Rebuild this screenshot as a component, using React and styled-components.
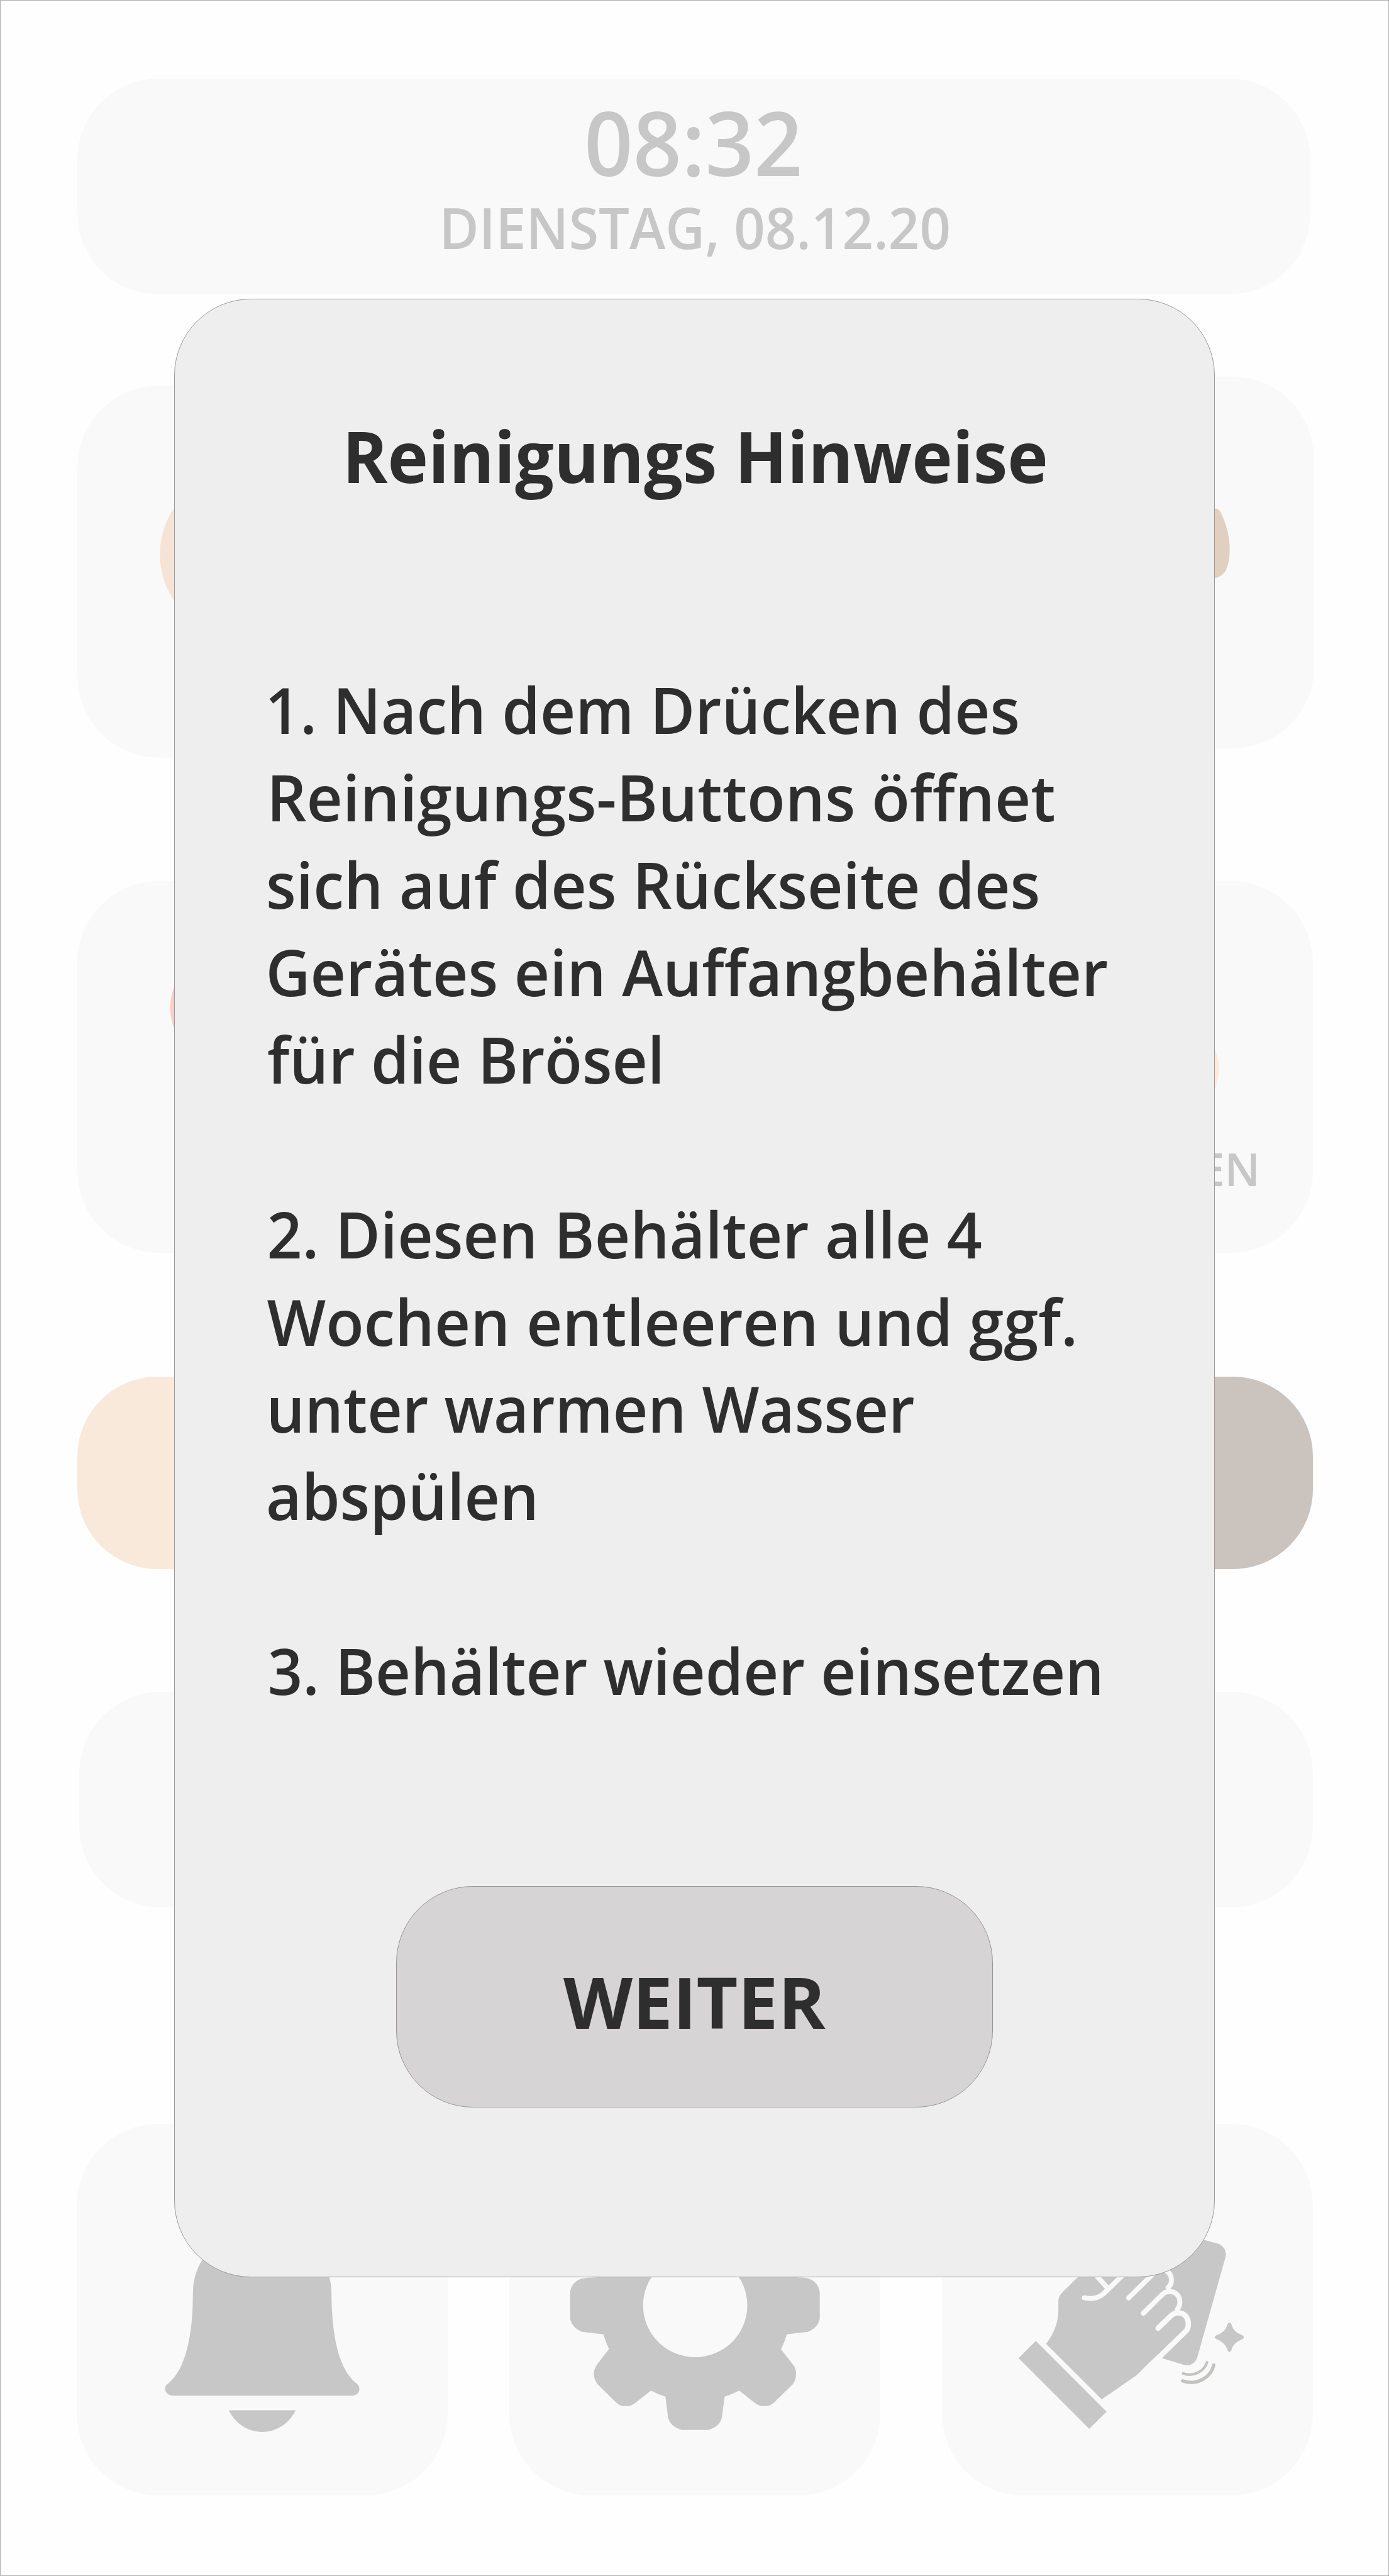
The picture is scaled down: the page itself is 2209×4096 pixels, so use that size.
import React from 'react';
import styled, { createGlobalStyle } from 'styled-components';

const CARD = '#f9f9f9';
const ICON = '#c7c7c7';
const INK = '#2e2e2e';

const GlobalStyle = createGlobalStyle`
  body {
    margin: 0;
    background: #fefefe;
    font-family: 'Open Sans', 'Noto Sans', sans-serif;
  }
`;

const Screen = styled.div`
  position: relative;
  box-sizing: border-box;
  width: 2209px;
  height: 4096px;
  overflow: hidden;
  border: 1px solid #b0b0b0;
  background: #fefefe;
`;

const Dashboard = styled.div`
  display: flex;
  flex-direction: column;
  padding: 124px 120px 0 120.5px;
`;

const Header = styled.header`
  display: flex;
  flex-direction: column;
  align-items: center;
  box-sizing: border-box;
  width: 1961px;
  height: 343px;
  margin-left: 1px;
  padding-top: 24.7px;
  border-radius: 129px;
  background: ${CARD};
  color: ${ICON};
  font-weight: 600;
  white-space: nowrap;
`;

const Time = styled.div`
  font-size: 142px;
  line-height: 151.8px;
  transform: scaleX(0.956);
`;

const DateText = styled.div`
  margin-top: -1px;
  font-size: 89.7px;
  line-height: 122.2px;
  transform: translateX(2px) scaleX(0.966);
`;

const CardRow = styled.div`
  display: flex;
  justify-content: space-between;
  align-items: flex-start;
  height: ${(p) => p.$height}px;
  margin-top: ${(p) => p.$gap}px;
  margin-left: ${(p) => p.$left || 0}px;
  margin-right: ${(p) => p.$right || 0}px;
`;

const Card = styled.div`
  display: grid;
  width: 590px;
  height: 591.5px;
  margin-top: ${(p) => p.$drop || 0}px;
  border-radius: 130px;
  background: ${CARD};
  & > * {
    grid-area: 1 / 1;
  }
`;

const Art = styled.svg`
  display: block;
  width: 100%;
  height: 100%;
`;

const CardLabel = styled.span`
  align-self: end;
  justify-self: end;
  padding: 0 84px 85.4px 0;
  color: ${ICON};
  font-size: 72px;
  font-weight: 600;
  line-height: 98px;
`;

const LevelBar = styled.div`
  display: flex;
  height: 305.7px;
  margin: 196.7px 0 0 1px;
  overflow: hidden;
  border-radius: 127px;
`;

const LevelPart = styled.div`
  flex: 1;
  background: ${(p) => p.$color};
`;

const Slider = styled.div`
  height: 343px;
  margin: 195.8px 0 0 4px;
  border-radius: 130px;
  background: ${CARD};
`;

const Modal = styled.section`
  position: absolute;
  top: 474px;
  left: 276px;
  display: flex;
  flex-direction: column;
  align-items: center;
  box-sizing: border-box;
  width: 1655px;
  height: 3146px;
  padding-top: 171.5px;
  border: 1px solid #9b9b9b;
  border-radius: 122px;
  background: #eeeeee;
  color: ${INK};
`;

const Title = styled.h1`
  margin: 0;
  font-size: 112.7px;
  font-weight: 700;
  line-height: 153.5px;
  white-space: nowrap;
  transform: translateX(1px) scaleX(0.968);
`;

const Steps = styled.div`
  display: flex;
  flex-direction: column;
  align-self: stretch;
  gap: 138.87px;
  margin-top: 258.4px;
  padding-left: 145px;
`;

const Step = styled.p`
  margin: 0;
  font-size: 102px;
  font-weight: 600;
  line-height: 138.87px;
  white-space: nowrap;
`;

const Line = styled.span`
  display: block;
  transform-origin: 0 0;
  transform: translateX(${(p) => p.$shift}px) scaleX(${(p) => p.$fit});
`;

const NextButton = styled.button`
  box-sizing: border-box;
  display: flex;
  justify-content: center;
  align-items: flex-start;
  width: 949px;
  height: 352px;
  margin: 272.9px 0 0;
  padding: 106.5px 0 0;
  border: 1px solid #969596;
  border-radius: 122px;
  background: #d6d4d5;
  color: ${INK};
  font-family: inherit;
  font-size: 112.8px;
  font-weight: 700;
  line-height: 153.6px;
`;

const ButtonText = styled.span`
  transform: scaleX(1.01);
`;

const steps = [
  [
    ['1. Nach dem Drücken des', -1.5, 0.957],
    ['Reinigungs-Buttons öffnet', 1, 0.9752],
    ['sich auf des Rückseite des', 0, 0.9625],
    ['Gerätes ein Auffangbehälter', -0.5, 0.961],
    ['für die Brösel', 2, 0.958],
  ],
  [
    ['2. Diesen Behälter alle 4', 1.4, 0.9623],
    ['Wochen entleeren und ggf.', 1.4, 0.973],
    ['unter warmen Wasser', 0.5, 0.9455],
    ['abspülen', 0, 0.9585],
  ],
  [['3. Behälter wieder einsetzen', 2.7, 0.952]],
];

const BunArt = () => (
  <Art viewBox="193 967 930 932">
    <circle cx="610" cy="1390" r="210" fill="#f5e4d5" />
    <circle cx="469" cy="1391" r="35" fill="#fdefd2" />
  </Art>
);

const BreadArt = () => (
  <Art viewBox="2364 944 930 932">
    <path
      d="M2980 1274H3045C3050 1274 3055 1276 3057.800 1280.800C3068 1299 3082 1337 3082 1368C3083 1396 3080 1412 3072.600 1429C3067 1440 3057 1446 3045 1449H2980Z"
      fill="#e1cfbf"
    />
  </Art>
);

const RedArt = () => (
  <Art viewBox="193 2208 930 932">
    <circle cx="569" cy="2525" r="143" fill="#ffccc7" />
  </Art>
);

const PeachArt = () => (
  <Art viewBox="2361 2208 930 932">
    <circle cx="2923.300" cy="2679.400" r="132" fill="#fdeadb" />
  </Art>
);

const BellArt = () => (
  <Art viewBox="59 108 1325 1393" preserveAspectRatio="none" fill={ICON}>
    <path d="M508 616C485 655 474 695 474 745C474 905 446 1028 388 1078C364 1093 374 1126 404 1126H1042C1070 1126 1078 1093 1056 1078C1000 1030 970 920 969 745C969 720 966 700 961 681L900 560H550Z" />
    <path d="M602 1181H841C790 1289 653 1289 602 1181Z" />
  </Art>
);

const GearArt = () => (
  <Art viewBox="56 -829.5 1459 2358.500" preserveAspectRatio="none">
    <path
      fill={ICON}
      d="M400 144L378 145Q350 147 340 152C312 165 297 203 295 240V400C297 440 314 472 342 489L426 505Q435 555 448 598L402 695Q389 725 388 752Q388 790 404 823L473 933Q488 958 504 960H522Q537 958 553 938L613 862Q640 885 670 900L680 1030Q688 1090 733 1111H840Q885 1090 892 1030L903 900Q932 885 960 862L1020 938Q1036 958 1050 960H1070Q1086 956 1100 933L1170 823Q1184 795 1184 755Q1184 720 1170 695L1124 598Q1138 560 1147 505L1230 489Q1270 465 1277 405V240Q1272 170 1230 150Q1220 146 1190 144V100H400Z"
    />
    <ellipse cx="787" cy="322" rx="205" ry="328" fill={CARD} />
  </Art>
);

const WipeArt = () => (
  <Art viewBox="21 -228 930 932">
    <g fill={ICON}>
      <path d="M560 20L678 62.500L714 72.500C728 78 735 91 732 105.600L661.500 356C657 372 643 380 628 376L572 359L540 340V60Z" />
      <path d="M361 157L326.500 190.600C315 202 313 206 313 218V239C313 271 300 300 282 323L421.600 462.400L504 405.500C514 398 518 393 523 388L627 287L632 271L600 140L400 120Z" />
      <path d="M256.400 316L213 359L390.300 536.300L433.700 493.200Z" />
      <path d="M747.500 277C751 288 758 294 770 300C781 304 781 309.500 770 313.500C758 319 751 326 747.500 336C746 346 737.500 346 736 336C732 326 726 319 713.500 313.500C702 309.500 702 304 713.500 300C726 294 732 288 736 277C737.500 267.500 746 267.500 747.500 277Z" />
    </g>
    <g fill="none" stroke={CARD} strokeWidth="12.500" strokeLinecap="round">
      <path strokeWidth="13.500" d="M528 393L632 292C645 279 640 246 613 245.500C604 245.500 599 249 595 253L563 284" />
      <path d="M611 237C622 225 621 193 591 192C582 192 577 196 572 201L526 246.500" />
      <path d="M588 182C600 172 600 150 582 139" />
      <path d="M489 208L543 155L560 138" />
      <path d="M378 208C400 212 415 208 430 194L468 157L480 145" />
      <path strokeLinecap="butt" d="M398 141L437 184" />
    </g>
    <g fill="none" stroke="#c3c3c1" strokeLinecap="round">
      <path strokeWidth="6.500" d="M625.500 397.500C652 407 679 392 685.600 369.500" />
      <path strokeWidth="8.500" d="M624.500 416C660 429 695 408 702.500 376.500" />
    </g>
  </Art>
);

export default function App() {
  return (
    <Screen>
      <GlobalStyle />
      <Dashboard>
        <Header>
          <Time>08:32</Time>
          <DateText>DIENSTAG, 08.12.20</DateText>
        </Header>
        <CardRow $gap={130.9} $height={606} $left={1} $right={-2}>
          <Card $drop={14.6}>
            <BunArt />
          </Card>
          <Card>
            <BreadArt />
          </Card>
        </CardRow>
        <CardRow $gap={195.8} $height={591.5} $left={1}>
          <Card>
            <RedArt />
          </Card>
          <Card>
            <PeachArt />
            <CardLabel>EN</CardLabel>
          </Card>
        </CardRow>
        <LevelBar>
          <LevelPart $color="#f8e9da" />
          <LevelPart $color="#cbc3be" />
        </LevelBar>
        <Slider />
        <CardRow $gap={343.2} $height={591.5}>
          <Card>
            <BellArt />
          </Card>
          <Card>
            <GearArt />
          </Card>
          <Card>
            <WipeArt />
          </Card>
        </CardRow>
      </Dashboard>
      <Modal>
        <Title>Reinigungs Hinweise</Title>
        <Steps>
          {steps.map((lines, i) => (
            <Step key={i}>
              {lines.map(([text, shift, fit]) => (
                <Line key={text} $shift={shift} $fit={fit}>
                  {text}
                </Line>
              ))}
            </Step>
          ))}
        </Steps>
        <NextButton>
          <ButtonText>WEITER</ButtonText>
        </NextButton>
      </Modal>
    </Screen>
  );
}
